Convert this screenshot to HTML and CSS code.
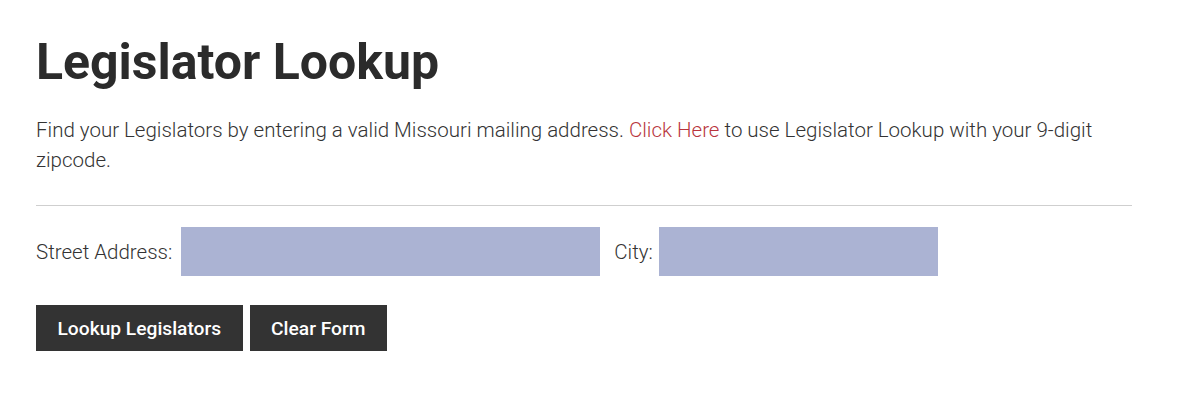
FILE: index.html
```html
<!DOCTYPE html>
<html>
<head>
<meta charset="utf-8">
<link rel="stylesheet" href="styles.css">
</head>
<body>
<div class="page">
  <h1 class="title">Legislator Lookup</h1>
  <p class="intro">Find your Legislators by entering a valid Missouri mailing address. <a class="link" href="#">Click Here</a> to use Legislator Lookup with your 9-digit zipcode.</p>
  <hr class="rule">
  <form class="form">
    <div class="fields">
      <label class="label label-street">Street Address:</label>
      <input class="input input-street" type="text">
      <label class="label label-city">City:</label>
      <input class="input input-city" type="text">
    </div>
    <div class="buttons">
      <button class="btn" type="button">Lookup Legislators</button>
      <button class="btn" type="button">Clear Form</button>
    </div>
  </form>
</div>
</body>
</html>
```
FILE: styles.css
```css
html, body {
  margin: 0;
  padding: 0;
  background: #fff;
}
body {
  font-family: Roboto, "Liberation Sans", sans-serif;
  color: #333;
}
.page {
  width: 1096px;
  padding: 27px 0 0 36px;
}
.title {
  margin: 0;
  font-size: 50px;
  font-weight: 700;
  line-height: 70px;
  color: #2b2b2b;
}
.intro {
  margin: 18px 0 0 0;
  font-size: 20.5px;
  font-weight: 300;
  line-height: 30px;
  color: #333;
}
.link {
  color: #b8353d;
  text-decoration: none;
}
.rule {
  margin: 30px 0 0 0;
  border: 0;
  border-top: 1px solid #cfcfcf;
  height: 0;
}
.form {
  margin-top: 21px;
}
.fields {
  display: flex;
  align-items: center;
}
.label {
  font-size: 20.5px;
  font-weight: 300;
  color: #333;
}
.label-street {
  margin-right: 9px;
}
.label-city {
  margin-right: 6px;
}
.input {
  border: 0;
  background: #abb3d3;
  height: 49px;
  padding: 0;
  margin: 0;
  outline: none;
}
.input-street {
  width: 419px;
  margin-right: 14px;
}
.input-city {
  width: 279px;
}
.buttons {
  display: flex;
  gap: 7px;
  margin-top: 29px;
}
.btn {
  background: #333;
  color: #fff;
  border: 0;
  height: 46px;
  padding: 0 21.5px;
  font-family: Roboto, "Liberation Sans", sans-serif;
  font-size: 19.2px;
  font-weight: 500;
  cursor: pointer;
}
```
